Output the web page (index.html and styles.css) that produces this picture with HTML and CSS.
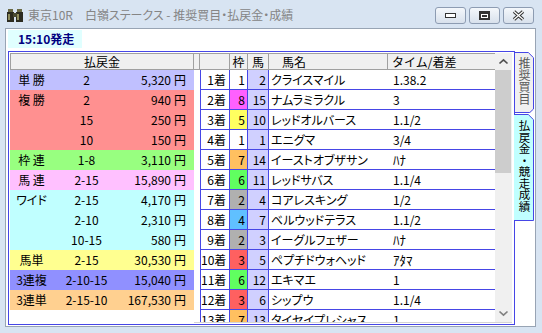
FILE: index.html
```html
<!DOCTYPE html>
<html lang="ja">
<head>
    <meta charset="UTF-8">
    <title>東京10R 白嶺ステークス</title>
    <link rel="stylesheet" href="styles.css">
</head>
<body>
    <div class="titlebar">
        <svg class="app-icon" width="16" height="13" viewBox="0 0 16 13">
            <rect x="1" y="0" width="5" height="3" fill="#6b6a45"/>
            <rect x="10" y="0" width="5" height="3" fill="#6b6a45"/>
            <rect x="0" y="3" width="7" height="10" fill="#2c2b20"/>
            <rect x="9" y="3" width="7" height="10" fill="#2c2b20"/>
            <rect x="6" y="4" width="4" height="4" fill="#4a4a32"/>
            <rect x="1" y="5" width="2" height="6" fill="#8f8d5c"/>
            <rect x="10" y="5" width="2" height="6" fill="#8f8d5c"/>
        </svg>
        <span class="title">東京10R　白嶺ステークス - 推奨買目・払戻金・成績</span>
        <div class="caption">
            <span class="cbtn">
                <svg width="11" height="5" viewBox="0 0 11 5"><rect x="0.5" y="0.5" width="10" height="4" fill="#fff" stroke="#333"/></svg>
            </span>
            <span class="cbtn">
                <svg width="11" height="9" viewBox="0 0 11 9"><rect x="0" y="0" width="11" height="9" fill="#333"/><rect x="2" y="3" width="7" height="4" fill="#fff"/><rect x="3" y="4" width="5" height="2" fill="#333"/></svg>
            </span>
            <span class="cbtn">
                <svg width="13" height="11" viewBox="0 0 13 11"><path d="M2 1.5 L11 9.5 M11 1.5 L2 9.5" stroke="#333" stroke-width="3.4"/><path d="M2 1.5 L11 9.5 M11 1.5 L2 9.5" stroke="#fff" stroke-width="1.3"/></svg>
            </span>
        </div>
    </div>

    <div class="client">
        <div class="post-time">15:10発走</div>
        <div class="main">
            <div class="panel">
                <!-- 払戻金 -->
                <div class="pay">
                    <div class="pay-head">払戻金</div>
                    <div class="pay-row tan"><span class="kind">単 勝</span><span class="combo">2</span><span class="amt">5,320</span><span class="yen">円</span></div>
                    <div class="pay-row fuku"><span class="kind">複 勝</span><span class="combo">2</span><span class="amt">940</span><span class="yen">円</span></div>
                    <div class="pay-row fuku"><span class="kind"></span><span class="combo">15</span><span class="amt">250</span><span class="yen">円</span></div>
                    <div class="pay-row fuku"><span class="kind"></span><span class="combo">10</span><span class="amt">150</span><span class="yen">円</span></div>
                    <div class="pay-row wakuren"><span class="kind">枠 連</span><span class="combo">1-8</span><span class="amt">3,110</span><span class="yen">円</span></div>
                    <div class="pay-row umaren"><span class="kind">馬 連</span><span class="combo">2-15</span><span class="amt">15,890</span><span class="yen">円</span></div>
                    <div class="pay-row wide"><span class="kind">ワイド</span><span class="combo">2-15</span><span class="amt">4,170</span><span class="yen">円</span></div>
                    <div class="pay-row wide"><span class="kind"></span><span class="combo">2-10</span><span class="amt">2,310</span><span class="yen">円</span></div>
                    <div class="pay-row wide"><span class="kind"></span><span class="combo">10-15</span><span class="amt">580</span><span class="yen">円</span></div>
                    <div class="pay-row umatan"><span class="kind">馬単</span><span class="combo">2-15</span><span class="amt">30,530</span><span class="yen">円</span></div>
                    <div class="pay-row sanfuku"><span class="kind">3連複</span><span class="combo">2-10-15</span><span class="amt">15,040</span><span class="yen">円</span></div>
                    <div class="pay-row santan"><span class="kind">3連単</span><span class="combo">2-15-10</span><span class="amt">167,530</span><span class="yen">円</span></div>
                </div>

                <!-- 競走成績 -->
                <div class="result">
                    <div class="grid">
                        <div class="h"></div><div class="h"></div><div class="h ctr">枠</div><div class="h ctr">馬</div><div class="h name-h">馬名</div><div class="h time-h">タイム/着差</div>

                        <div class="s"></div><div class="rank">1着</div><div class="waku w1">1</div><div class="uma">2</div><div class="name">クライスマイル</div><div class="time">1.38.2</div>
                        <div class="s"></div><div class="rank">2着</div><div class="waku w8">8</div><div class="uma">15</div><div class="name">ナムラミラクル</div><div class="time">3</div>
                        <div class="s"></div><div class="rank">3着</div><div class="waku w5">5</div><div class="uma">10</div><div class="name">レッドオルバース</div><div class="time">1.1/2</div>
                        <div class="s"></div><div class="rank">4着</div><div class="waku w1">1</div><div class="uma">1</div><div class="name">エニグマ</div><div class="time">3/4</div>
                        <div class="s"></div><div class="rank">5着</div><div class="waku w7">7</div><div class="uma">14</div><div class="name">イーストオブザサン</div><div class="time"><span class="kana">ﾊﾅ</span></div>
                        <div class="s"></div><div class="rank">6着</div><div class="waku w6">6</div><div class="uma">11</div><div class="name">レッドサバス</div><div class="time">1.1/4</div>
                        <div class="s"></div><div class="rank">7着</div><div class="waku w2">2</div><div class="uma">4</div><div class="name">コアレスキング</div><div class="time">1/2</div>
                        <div class="s"></div><div class="rank">8着</div><div class="waku w4">4</div><div class="uma">7</div><div class="name">ベルウッドテラス</div><div class="time">1.1/2</div>
                        <div class="s"></div><div class="rank">9着</div><div class="waku w2">2</div><div class="uma">3</div><div class="name">イーグルフェザー</div><div class="time"><span class="kana">ﾊﾅ</span></div>
                        <div class="s"></div><div class="rank">10着</div><div class="waku w3">3</div><div class="uma">5</div><div class="name">ペプチドウォヘッド</div><div class="time"><span class="kana">ｱﾀﾏ</span></div>
                        <div class="s"></div><div class="rank">11着</div><div class="waku w6">6</div><div class="uma">12</div><div class="name">エキマエ</div><div class="time">1</div>
                        <div class="s"></div><div class="rank">12着</div><div class="waku w3">3</div><div class="uma">6</div><div class="name">シップウ</div><div class="time">1.1/4</div>
                        <div class="s"></div><div class="rank">13着</div><div class="waku w7">7</div><div class="uma">13</div><div class="name">タイセイプレシャス</div><div class="time">1</div>
                    </div>
                    <div class="vscroll">
                        <div class="sb-btn">
                            <svg width="11" height="7" viewBox="0 0 11 7"><polyline points="1.5,5.5 5.5,1.8 9.5,5.5" fill="none" stroke="#505050" stroke-width="1.7"/></svg>
                        </div>
                        <div class="sb-thumb"></div>
                        <div class="sb-track"></div>
                        <div class="sb-btn">
                            <svg width="11" height="7" viewBox="0 0 11 7"><polyline points="1.5,1.5 5.5,5.2 9.5,1.5" fill="none" stroke="#808080" stroke-width="1.7"/></svg>
                        </div>
                    </div>
                </div>
            </div>

            <div class="tabs">
                <div class="tab tab-1">
                    <svg class="tab-shape" width="19" height="61" viewBox="0 0 19 61">
                        <path d="M0 0 H13 L19 6 V57 L15 61 H0 Z" fill="#f0f0f0"/>
                        <polyline points="0,0.5 13.3,0.5 18.5,5.7 18.5,57 14.8,60.5 0,60.5" fill="none" stroke="#4646e6"/>
                    </svg>
                    <span class="tab-text">推奨買目</span>
                </div>
                <div class="tab tab-2">
                    <svg class="tab-shape" width="20" height="107" viewBox="0 0 20 107">
                        <path d="M0 0 H14 L20 6 V107 H0 Z" fill="#c0ffff"/>
                        <polyline points="0,0.5 14.3,0.5 19.5,5.7 19.5,106.5 0,106.5" fill="none" stroke="#4646e6"/>
                    </svg>
                    <span class="tab-text">払戻金・競走成績</span>
                </div>
            </div>
        </div>
    </div>
</body>
</html>
```

FILE: styles.css
```css
body {
    margin: 0;
    width: 542px;
    height: 333px;
    overflow: hidden;
    background-color: #d8e4f2;
    font-family: "Noto Sans CJK JP", sans-serif;
    font-size: 12px;
    color: #000;
}

/* window caption */
.titlebar {
    height: 28px;
    display: flex;
    align-items: flex-start;
}
.app-icon {
    margin: 9px 0 0 7px;
}
.title {
    margin: 7px 0 0 5px;
    color: #858585;
    font-size: 12px;
    line-height: 16px;
    white-space: nowrap;
    font-feature-settings: "palt";
}
.caption {
    display: flex;
    gap: 3px;
    margin: 7px 8px 0 auto;
}
.cbtn {
    width: 31px;
    height: 17px;
    box-sizing: border-box;
    border: 1px solid #8d9cb2;
    border-radius: 3px;
    background: linear-gradient(#f4f7fb, #d8e1ec);
    display: flex;
    align-items: center;
    justify-content: center;
}

/* client area */
.client {
    margin: 0 6px 0 5px;
    height: 299px;
    box-sizing: border-box;
    border: 1px solid #98a4b4;
    background-color: #fff;
}
.post-time {
    margin: 1px 0 0 2px;
    width: 74px;
    height: 18px;
    box-sizing: border-box;
    padding-left: 10px;
    background-color: #e0ffff;
    color: #000080;
    font-weight: bold;
    line-height: 18px;
}
.main {
    display: flex;
    margin: 3px 0 0 2px;
}
.panel {
    width: 507px;
    height: 274px;
    box-sizing: border-box;
    border: 1px solid #4646e6;
    padding: 1px 0 0 1px;
    display: flex;
}

/* payout table */
.pay {
    width: 184px;
}
.pay-head {
    height: 17px;
    box-sizing: border-box;
    border: 1px solid #a0a0a0;
    background-color: #f0f0f0;
    text-align: center;
    line-height: 15px;
}
.pay-row {
    display: grid;
    grid-template-columns: 43px 67px 51px 15px;
    height: 20px;
    line-height: 20px;
    white-space: nowrap;
}
.kind {
    text-align: center;
    font-feature-settings: "palt";
}
.combo {
    text-align: center;
}
.amt {
    text-align: right;
}
.yen {
    text-align: right;
}
.tan { background-color: #c0c0ff; }
.fuku { background-color: #ff9090; }
.wakuren { background-color: #98ff80; }
.umaren { background-color: #ffc0ff; }
.wide { background-color: #c0ffff; }
.umatan { background-color: #ffff90; }
.sanfuku { background-color: #9090ff; }
.santan { background-color: #ffd090; }

/* result grid */
.result {
    display: flex;
    height: 270px;
    box-sizing: border-box;
    border-bottom: 1px solid #d4d4d4;
    overflow: hidden;
}
.grid {
    display: grid;
    grid-template-columns: 6px 30px 18px 21px 119px 107px;
    grid-template-rows: 17px;
    grid-auto-rows: 20px;
    align-content: start;
}
.grid > div {
    box-sizing: border-box;
    white-space: nowrap;
    overflow: hidden;
    line-height: 19px;
}
.grid > .h {
    background-color: #f0f0f0;
    border-top: 1px solid #a0a0a0;
    border-bottom: 1px solid #a0a0a0;
    border-right: 1px solid #a0a0a0;
    line-height: 15px;
}
.grid > .ctr {
    text-align: center;
}
.grid > .name-h {
    padding-left: 13px;
}
.grid > .time-h {
    padding-left: 4px;
    border-right: none;
}
.rank {
    border-left: 1px solid #4646e6;
    border-right: 1px solid #4646e6;
    border-bottom: 1px solid #4646e6;
    text-align: right;
    padding-right: 3px;
}
.waku {
    border-right: 1px solid #4646e6;
    border-bottom: 1px solid #4646e6;
    text-align: right;
    padding-right: 2px;
}
.uma {
    background-color: #d0d0ff;
    border-right: 1px solid #4646e6;
    border-bottom: 1px solid #4646e6;
    text-align: right;
    padding-right: 2px;
}
.name {
    border-bottom: 1px solid #4646e6;
    padding-left: 2px;
    font-feature-settings: "palt";
}
.time {
    border-bottom: 1px solid #4646e6;
    padding-left: 5px;
}
.kana {
    font-size: 13px;
}
.w1 { background-color: #fff; }
.w2 { background-color: #b0b0b0; }
.w3 { background-color: #ff6060; }
.w4 { background-color: #60c0ff; }
.w5 { background-color: #ffff60; }
.w6 { background-color: #60ff60; }
.w7 { background-color: #ffc060; }
.w8 { background-color: #ff60ff; }

/* scrollbar */
.vscroll {
    width: 17px;
    display: flex;
    flex-direction: column;
    background-color: #f0f0f0;
}
.sb-btn {
    height: 17px;
    display: flex;
    align-items: center;
    justify-content: center;
}
.sb-thumb {
    height: 103px;
    margin-right: 1px;
    background-color: #cdcdcd;
}
.sb-track {
    flex: 1;
}

/* side tabs */
.tabs {
    display: flex;
    flex-direction: column;
    margin-top: 1px;
}
.tab {
    position: relative;
    width: 19px;
    display: flex;
    justify-content: center;
    box-sizing: border-box;
}
.tab-shape {
    position: absolute;
    left: 0;
    top: 0;
}
.tab-text {
    position: relative;
    writing-mode: vertical-rl;
    line-height: 19px;
}
.tab-1 {
    height: 61px;
    padding-top: 5px;
    color: #5a5a5a;
}
.tab-2 {
    width: 20px;
    height: 107px;
    margin: 1px 0 0 -1px;
    padding-top: 6px;
    font-size: 11.5px;
}
```
